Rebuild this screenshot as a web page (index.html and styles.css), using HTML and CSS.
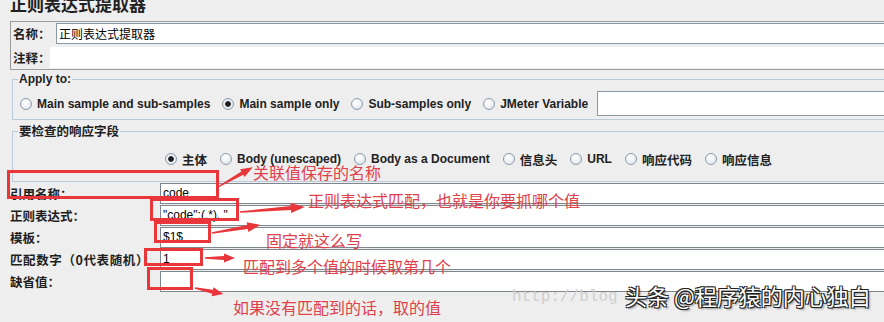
FILE: index.html
```html
<!DOCTYPE html>
<html lang="zh-CN">
<head>
    <meta charset="UTF-8">
    <title>正则表达式提取器</title>
    <link rel="stylesheet" href="styles.css">
</head>
<body>
<div class="page">
    <h1 class="title">正则表达式提取器</h1>

    <div class="name-panel">
        <div class="name-row">
            <label class="cjk name-label">名称：</label>
            <div class="field name-field">正则表达式提取器</div>
        </div>
        <div class="name-row">
            <label class="cjk comment-label">注释：</label>
            <div class="field comment-field"></div>
        </div>
    </div>

    <fieldset class="group apply">
        <legend>Apply to:</legend>
        <div class="radio-row apply-row">
            <span class="radio">Main sample and sub-samples</span>
            <span class="radio on">Main sample only</span>
            <span class="radio">Sub-samples only</span>
            <span class="radio">JMeter Variable</span>
            <div class="field var-field"></div>
        </div>
    </fieldset>

    <fieldset class="group check">
        <legend class="cjk">要检查的响应字段</legend>
        <div class="radio-row check-row">
            <span class="radio on cjk">主体</span>
            <span class="radio">Body (unescaped)</span>
            <span class="radio">Body as a Document</span>
            <span class="radio cjk">信息头</span>
            <span class="radio">URL</span>
            <span class="radio cjk">响应代码</span>
            <span class="radio cjk">响应信息</span>
        </div>
    </fieldset>

    <div class="params">
        <label class="cjk">引用名称：</label>
        <div class="field">code</div>
        <label class="cjk">正则表达式：</label>
        <div class="field">"code":(.*), "</div>
        <label class="cjk">模板：</label>
        <div class="field">$1$</div>
        <label class="cjk wide">匹配数字（0代表随机）：</label>
        <div class="field">1</div>
        <label class="cjk">缺省值：</label>
        <div class="field"></div>
    </div>

    <!-- red annotations drawn over the screenshot -->
    <div class="notes">
        <svg class="marks" width="884" height="322" viewBox="0 0 884 322">
            <g fill="none" stroke="#e8363b" stroke-width="3">
                <rect x="8.5" y="176.5" width="209" height="26"/>
                <rect x="151.5" y="204.5" width="86" height="20"/>
                <rect x="155.5" y="227.5" width="54" height="19"/>
                <rect x="145.5" y="254.5" width="56" height="15"/>
                <rect x="148.5" y="273.5" width="43" height="20"/>
            </g>
            <g fill="#e8363b">
                <polygon transform="translate(218,192) rotate(-29.7)" points="0,-0.7 28,-2 28,-4.5 40,0 28,4.5 28,2 0,0.7"/>
                <polygon transform="translate(240,217) rotate(-4.4)" points="0,-0.7 51,-2 51,-5 65,0 51,5 51,2 0,0.7"/>
                <polygon transform="translate(212,238) rotate(-9.5)" points="0,-0.7 36,-2 36,-5 49,0 36,5 36,2 0,0.7"/>
                <polygon transform="translate(205,263)" points="0,-0.7 19,-2 19,-4.5 30,0 19,4.5 19,2 0,0.7"/>
                <polygon transform="translate(195,293) rotate(12.1)" points="0,-0.7 18,-2 18,-4.5 29,0 18,4.5 18,2 0,0.7"/>
            </g>
        </svg>
        <span class="note note-1">关联值保存的名称</span>
        <span class="note note-2">正则表达式匹配，也就是你要抓哪个值</span>
        <span class="note note-3">固定就这么写</span>
        <span class="note note-4">匹配到多个值的时候取第几个</span>
        <span class="note note-5">如果没有匹配到的话，取的值</span>
        <span class="wm-url">http://blog</span>
        <span class="wm-brand">头条 @程序猿的内心独白</span>
    </div>
</div>
</body>
</html>
```

FILE: styles.css
```css
body {
    margin: 0;
    background-color: #eeeeee;
    font-family: "Liberation Sans", "Noto Sans CJK SC", sans-serif;
    font-size: 12px;
    color: #1e1e1e;
    overflow: hidden;
}
.page {
    position: relative;
    width: 884px;
    height: 322px;
}
.cjk {
    font-family: "Noto Sans CJK SC", sans-serif;
    font-size: 12.5px;
}
.title {
    margin: -5px 0 0 10px;
    font-family: "Noto Sans CJK SC", sans-serif;
    font-size: 17px;
    line-height: 17px;
    font-weight: bold;
    color: #222;
}

/* name / comment box */
.name-panel {
    margin: 9px 0 0 10px;
    padding: 1px 0 1px 2px;
    border: 1px solid #9c9c9c;
    border-right: none;
}
.name-row {
    display: flex;
    align-items: center;
    height: 21px;
}
.name-row + .name-row { margin-top: 3px; }
.name-row label {
    flex: none;
    font-weight: bold;
    white-space: nowrap;
}
.name-label { width: 43px; }
.comment-label { width: 37px; }
.field {
    box-sizing: border-box;
    height: 21px;
    padding-left: 2px;
    background-color: #fff;
    border: 1px solid #7f878e;
    border-right: none;
    line-height: 19px;
    color: #000;
    white-space: pre;
}
.name-field {
    flex: 1;
    border-color: #8a97a4;
    font-family: "Noto Sans CJK SC", sans-serif;
}
.comment-field {
    flex: 1;
    border: none;
}

/* titled groups */
.group {
    margin: 2px 0 0 12px;
    padding: 0;
    min-width: 0;
    border: 1px solid #b9cadb;
    border-right: none;
}
.group legend {
    margin-left: 5px;
    padding: 0 1px;
    font-weight: bold;
    line-height: 14px;
}
.group.check { margin-top: 4px; }
.radio-row {
    display: flex;
    align-items: center;
}
.apply-row {
    height: 25px;
    padding: 5px 0 3px 7px;
    gap: 12px;
}
.check-row {
    height: 14px;
    padding: 14px 0 15px 152px;
    gap: 13px;
}
.radio {
    display: inline-flex;
    align-items: center;
    font-weight: bold;
    color: #222;
    white-space: nowrap;
}
.radio::before {
    content: "";
    width: 10px;
    height: 10px;
    margin-right: 5px;
    border: 1px solid #8d9cab;
    border-radius: 50%;
    background: radial-gradient(circle at 40% 35%, #ffffff 0, #f2f5f8 40%, #d3dbe4 100%);
}
.radio.on::before {
    background: radial-gradient(circle, #1c1c1c 0, #1c1c1c 2.4px, #eef2f6 3.2px, #d3dbe4 100%);
}
.var-field {
    flex: 1;
    height: 25px;
    margin-left: -3px;
    border-color: #8a97a4;
}

/* extractor parameters */
.params {
    display: grid;
    grid-template-columns: 150px 1fr;
    row-gap: 1px;
    margin-top: 1px;
    padding-left: 10px;
}
.params label {
    align-self: center;
    font-weight: bold;
    white-space: nowrap;
}
.params .wide { letter-spacing: 0.6px; }

/* annotations */
.notes {
    position: absolute;
    left: 0;
    top: 0;
    width: 884px;
    height: 322px;
    pointer-events: none;
}
.marks {
    position: absolute;
    left: 0;
    top: 0;
}
.note {
    position: absolute;
    font-family: "Noto Sans CJK SC", sans-serif;
    font-size: 16px;
    line-height: 16px;
    color: #e0404a;
    white-space: nowrap;
}
.note-1 { left: 253px; top: 169px; }
.note-2 { left: 308px; top: 197px; }
.note-3 { left: 266px; top: 237px; }
.note-4 { left: 243px; top: 263px; }
.note-5 { left: 233px; top: 304px; }
.wm-url {
    position: absolute;
    left: 512px;
    top: 294px;
    font-family: "Liberation Mono", monospace;
    font-size: 16px;
    line-height: 16px;
    color: #cfcfcf;
}
.wm-brand {
    position: absolute;
    left: 625px;
    top: 289px;
    font-family: "Noto Sans CJK SC", sans-serif;
    font-size: 22px;
    line-height: 22px;
    color: #fff;
    white-space: nowrap;
    text-shadow: 1px 1px 0 #222, -1px -1px 0 #222, 1px -1px 0 #222, -1px 1px 0 #222, 2px 2px 2px rgba(0,0,0,0.4);
}
```
